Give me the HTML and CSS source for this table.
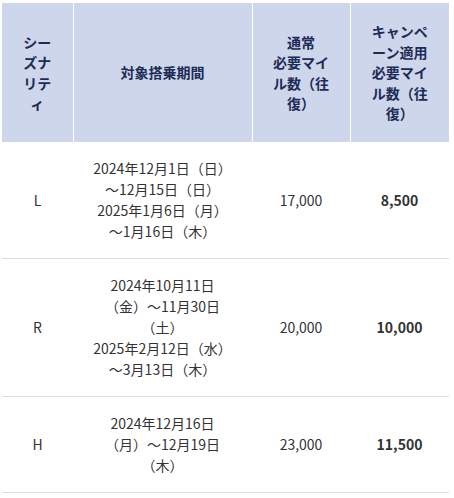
FILE: index.html
```
<!DOCTYPE html>
<html lang="ja">
<head>
<meta charset="utf-8">
<link rel="stylesheet" href="styles.css">
</head>
<body>
<div class="wrap">
<table class="miles">
  <colgroup>
    <col class="c1"><col class="c2"><col class="c3"><col class="c4">
  </colgroup>
  <thead>
    <tr>
      <th>シーズナリティ</th>
      <th>対象搭乗期間</th>
      <th>通常<br>必要マイル数（往復）</th>
      <th>キャンペーン適用必要マイル数（往復）</th>
    </tr>
  </thead>
  <tbody>
    <tr>
      <td>L</td>
      <td class="period">2024年12月1日（日）<br>～12月15日（日）<br>2025年1月6日（月）<br>～1月16日（木）</td>
      <td>17,000</td>
      <td class="b">8,500</td>
    </tr>
    <tr>
      <td>R</td>
      <td class="period">2024年10月11日<br>（金）～11月30日<br>（土）<br>2025年2月12日（水）<br>～3月13日（木）</td>
      <td>20,000</td>
      <td class="b">10,000</td>
    </tr>
    <tr>
      <td>H</td>
      <td class="period">2024年12月16日<br>（月）～12月19日<br>（木）</td>
      <td>23,000</td>
      <td class="b">11,500</td>
    </tr>
  </tbody>
</table>
</div>
</body>
</html>
```
FILE: styles.css
```
html, body {
  margin: 0;
  padding: 0;
  background: #fff;
}
.wrap {
  padding: 3px 5px 0 2px;
}
.miles {
  width: 447px;
  border-collapse: collapse;
  table-layout: fixed;
  font-family: "Noto Sans CJK JP", "Noto Sans", sans-serif;
  font-size: 14px;
  line-height: 21px;
  color: #333;
}
.c1 { width: 71px; }
.c2 { width: 179px; }
.c3 { width: 98px; }
.c4 { width: 99px; }
.miles th {
  background: #cdd6ea;
  color: #1d2b57;
  font-weight: bold;
  text-align: center;
  vertical-align: middle;
  padding: 17px 20px;
  height: 105px;
  line-height: 20.5px;
  border-left: 1px solid #fff;
}
.miles th:first-child { border-left: none; padding: 17px 21px; }
.miles td {
  text-align: center;
  vertical-align: middle;
  padding: 16px 20px;
  border-bottom: 1px solid #ddd;
}
.miles td.period { padding: 16px 8px; white-space: nowrap; }
.miles td.b { font-weight: bold; }
```
